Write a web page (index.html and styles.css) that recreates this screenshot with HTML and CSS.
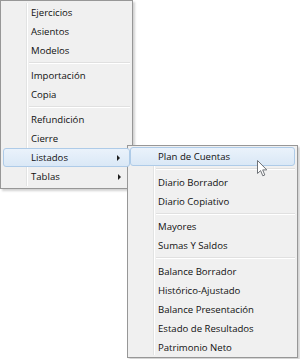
FILE: index.html
```html
<!DOCTYPE html>
<html lang="es">
<head>
    <meta charset="UTF-8">
    <title>Menú Listados</title>
    <link rel="stylesheet" href="styles.css">
</head>
<body>
    <div class="stage">
        <ul class="menu main-menu">
            <li class="item">Ejercicios</li>
            <li class="item">Asientos</li>
            <li class="item">Modelos</li>
            <li class="sep"></li>
            <li class="item">Importación</li>
            <li class="item">Copia</li>
            <li class="sep"></li>
            <li class="item">Refundición</li>
            <li class="item">Cierre</li>
            <li class="item has-sub active">Listados</li>
            <li class="item has-sub">Tablas</li>
        </ul>

        <ul class="menu sub-menu">
            <li class="item active">Plan de Cuentas</li>
            <li class="sep"></li>
            <li class="item">Diario Borrador</li>
            <li class="item">Diario Copiativo</li>
            <li class="sep"></li>
            <li class="item">Mayores</li>
            <li class="item">Sumas Y Saldos</li>
            <li class="sep"></li>
            <li class="item">Balance Borrador</li>
            <li class="item">Histórico-Ajustado</li>
            <li class="item">Balance Presentación</li>
            <li class="item">Estado de Resultados</li>
            <li class="item">Patrimonio Neto</li>
        </ul>

        <!-- puntero del ratón -->
        <svg class="cursor" width="12" height="17" viewBox="0 0 12 17">
            <path d="M0.5 0.5 L0.5 13.5 L3.6 10.6 L5.8 15.8 L7.8 15 L5.7 9.9 L9.8 9.9 Z"
                  fill="#ffffff" stroke="#6f7378" stroke-width="1" stroke-linejoin="round"/>
        </svg>
    </div>
</body>
</html>
```

FILE: styles.css
```css
body {
    margin: 0;
    background: #ffffff;
    font-family: "Open Sans", "Noto Sans", sans-serif;
    font-size: 9.6px;
    color: #111111;
}
.stage {
    position: relative;
    width: 300px;
    height: 359px;
}
.menu {
    list-style: none;
    margin: 0;
    padding: 2px;
    background: #f0f0f0;
    border: 1px solid #979797;
    box-shadow: 2px 2px 2px rgba(0, 0, 0, 0.18);
}
.menu::before {
    /* linea del margen de iconos */
    content: "";
    position: absolute;
    top: 2px;
    bottom: 2px;
    left: 25px;
    width: 1px;
    background: #e2e3e3;
    border-right: 1px solid #ffffff;
}
.main-menu {
    position: relative;
    width: 127px;
}
.sub-menu {
    position: absolute;
    left: 127px;
    top: 145px;
    width: 165px;
    padding: 1px 2px 0;
}
.item {
    position: relative;
    height: 19px;
    line-height: 19px;
    padding-left: 28px;
    white-space: nowrap;
    z-index: 1;
}
.item.active {
    background: linear-gradient(#eaf2fb, #dae8f6);
    border: 1px solid #aecbe8;
    border-radius: 3px;
    height: 17px;
    line-height: 17px;
    padding-left: 27px;
}
.has-sub::after {
    content: "";
    position: absolute;
    right: 9px;
    top: 50%;
    margin-top: -3px;
    border-left: 3px solid #1e1e1e;
    border-top: 3px solid transparent;
    border-bottom: 3px solid transparent;
}
.sep {
    position: relative;
    height: 6px;
    margin-left: 26px;
}
.sep::after {
    content: "";
    position: absolute;
    left: 0;
    right: 0;
    top: 2px;
    height: 1px;
    background: #e0e0e0;
    border-bottom: 1px solid #ffffff;
}
.sub-menu .sep {
    height: 6.5px;
}
.cursor {
    position: absolute;
    left: 257px;
    top: 160px;
    z-index: 5;
}
```
